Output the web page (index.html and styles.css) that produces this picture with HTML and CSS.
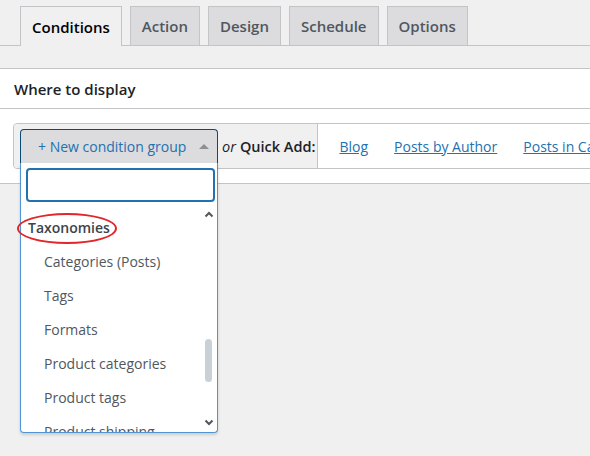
FILE: index.html
```html
<!DOCTYPE html>
<html>
<head>
<meta charset="utf-8">
<link rel="stylesheet" href="styles.css">
</head>
<body>
<div class="tabs">
  <div class="tab active">Conditions</div>
  <div class="tab">Action</div>
  <div class="tab">Design</div>
  <div class="tab">Schedule</div>
  <div class="tab">Options</div>
</div>
<div class="panel">
  <div class="panel-head">Where to display</div>
  <div class="panel-body">
    <div class="cond-bar">
      <div class="cond-left">
        <div class="select">
          <span class="select-text">+ New condition group</span>
          <span class="select-arrow"></span>
        </div>
        <span class="or">or</span>
        <span class="qa">Quick Add:</span>
      </div>
      <div class="cond-links">
        <a href="#">Blog</a>
        <a href="#">Posts by Author</a>
        <a href="#">Posts in Categories</a>
      </div>
    </div>
  </div>
</div>

<div class="dropdown">
  <div class="search"></div>
  <div class="list">
    <div class="group">Taxonomies</div>
    <div class="item">Categories (Posts)</div>
    <div class="item">Tags</div>
    <div class="item">Formats</div>
    <div class="item">Product categories</div>
    <div class="item">Product tags</div>
    <div class="item wrap">Product shipping classes</div>
  </div>
  <svg class="sb-up" width="10" height="7" viewBox="0 0 10 7"><path d="M1.5 5.5 L5 2 L8.5 5.5" fill="none" stroke="#50575e" stroke-width="2"/></svg>
  <div class="sb-thumb"></div>
  <svg class="sb-down" width="10" height="7" viewBox="0 0 10 7"><path d="M1.5 1.5 L5 5 L8.5 1.5" fill="none" stroke="#50575e" stroke-width="2"/></svg>
</div>
<div class="circle"></div>
</body>
</html>
```
FILE: styles.css
```css
html, body {
  margin: 0;
  padding: 0;
  background: #f0f0f1;
  font-family: "Open Sans", "Noto Sans", sans-serif;
  overflow: hidden;
  width: 590px;
  height: 456px;
}
.tabs {
  display: flex;
  gap: 8px;
  padding: 6px 0 0 20px;
  border-bottom: 1px solid #c3c4c7;
  height: 39px;
  box-sizing: content-box;
}
.tab {
  box-sizing: border-box;
  border: 1px solid #c3c4c7;
  border-bottom: none;
  background: #dcdcde;
  color: #50575e;
  font-size: 15px;
  font-weight: 600;
  padding: 0 11px;
  display: flex;
  align-items: center;
  height: 39px;
}
.tab.active {
  background: #f0f0f1;
  color: #000;
  height: 40px;
  margin-bottom: -1px;
}
.panel {
  margin-top: 22px;
  background: #fff;
  border-top: 1px solid #c3c4c7;
  border-bottom: 1px solid #c3c4c7;
}
.panel-head {
  height: 40px;
  box-sizing: border-box;
  border-bottom: 1px solid #c3c4c7;
  padding-left: 14px;
  display: flex;
  align-items: center;
  font-size: 15px;
  font-weight: 600;
  color: #1d2327;
}
.panel-body {
  height: 74px;
  padding: 14px 0 0 13px;
  box-sizing: border-box;
}
.cond-bar {
  display: flex;
  width: 800px;
  height: 46px;
  box-sizing: border-box;
  border: 1px solid #c3c4c7;
  border-radius: 4px;
  background: #fff;
}
.cond-left {
  display: flex;
  align-items: center;
  background: #f0f0f1;
  border-right: 1px solid #c3c4c7;
  padding: 0 2px 0 6px;
  border-radius: 4px 0 0 4px;
}
.select {
  width: 198px;
  box-sizing: border-box;
  border: 1px solid #0a4b78;
  border-bottom: none;
  border-radius: 4px 4px 0 0;
  background: #dcdcde;
  display: flex;
  align-items: center;
  padding: 0 8px 0 17px;
  justify-content: space-between;
  align-self: flex-end;
  margin-bottom: 5px;
  height: 34px;
}
.select-text {
  color: #2271b1;
  font-size: 14px;
}
.select-arrow {
  width: 0;
  height: 0;
  border-left: 5px solid transparent;
  border-right: 5px solid transparent;
  border-bottom: 5px solid #8c8f94;
}
.or {
  font-style: italic;
  font-size: 14.5px;
  color: #1d2327;
  margin-left: 4px;
}
.qa {
  font-size: 14.5px;
  font-weight: 600;
  color: #1d2327;
  margin-left: 4px;
}
.cond-links {
  display: flex;
  align-items: center;
  gap: 26px;
  padding-left: 21px;
}
.cond-links a {
  color: #2271b1;
  font-size: 14px;
  text-decoration: underline;
  white-space: nowrap;
}
.dropdown {
  position: absolute;
  left: 20px;
  top: 163px;
  width: 198px;
  height: 270px;
  box-sizing: border-box;
  background: #fff;
  border: 1px solid #4f94d4;
  border-top: none;
  border-radius: 0 0 4px 4px;
  box-shadow: 0 2px 3px rgba(0,0,0,0.15);
  overflow: hidden;
}
.search {
  margin: 5px 2px 0 5px;
  height: 34px;
  box-sizing: border-box;
  border: 2px solid #2271b1;
  border-radius: 4px;
}
.list {
  padding-top: 9px;
}
.group {
  height: 34px;
  line-height: 34px;
  padding-left: 7px;
  font-size: 14px;
  font-weight: 600;
  color: #3c434a;
}
.item {
  height: 34px;
  line-height: 34px;
  padding-left: 23px;
  font-size: 14px;
  color: #50575e;
  white-space: nowrap;
}
.item.wrap {
  white-space: normal;
  height: auto;
  padding-right: 30px;
}
.sb-up {
  position: absolute;
  left: 183px;
  top: 48px;
}
.sb-down {
  position: absolute;
  left: 183px;
  top: 256px;
}
.sb-thumb {
  position: absolute;
  left: 184px;
  top: 176px;
  width: 7px;
  height: 43px;
  border-radius: 4px;
  background: #c9d0d6;
}
.circle {
  position: absolute;
  left: 17px;
  top: 213px;
  width: 96px;
  height: 27px;
  border: 2.5px solid #e3262b;
  border-radius: 50%;
}
```
